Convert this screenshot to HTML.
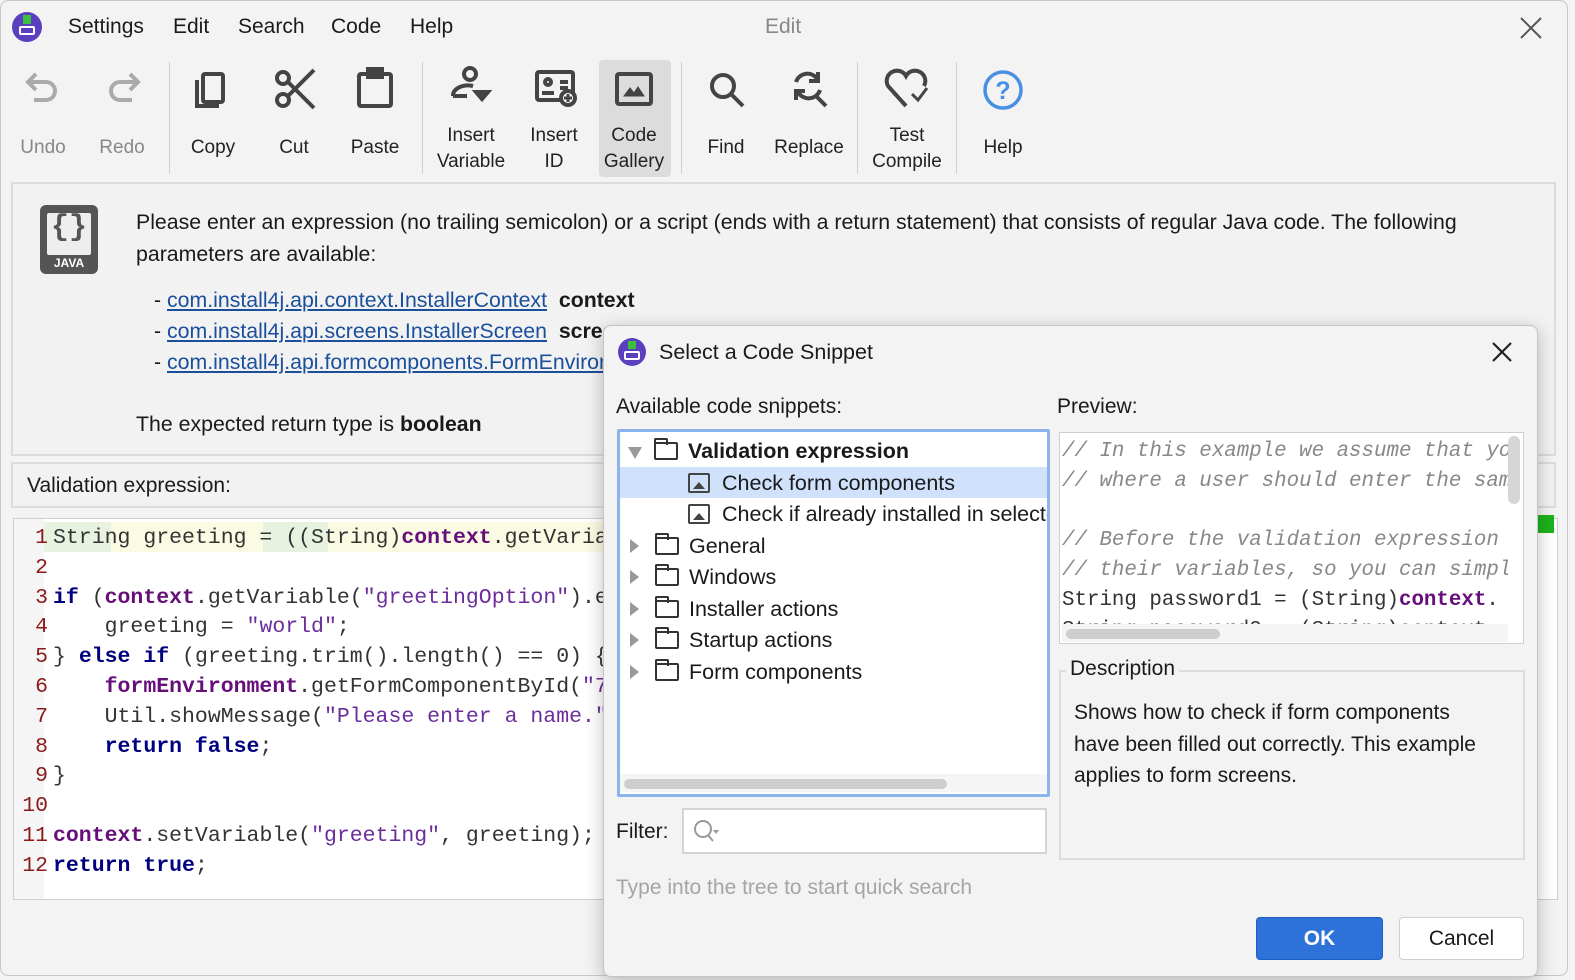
<!DOCTYPE html>
<html><head><meta charset="utf-8"><style>
*{box-sizing:border-box;margin:0;padding:0}
body{width:1575px;height:980px;background:#f3f3f3;font-family:"Liberation Sans",sans-serif;color:#1a1a1a;position:relative;overflow:hidden}
.a{position:absolute}
.win{left:0;top:0;width:1568px;height:976px;border:1px solid #c8c8c8;border-radius:8px;background:#f3f3f3}
.menu{font-size:21px;top:15px}
.tb{top:60px;text-align:center;font-size:19px;color:#222;line-height:26px}
.tbl{position:absolute;width:80px;text-align:center}
.sep{position:absolute;top:62px;width:1px;height:112px;background:#d0d0d0}
.mono{font-family:"Liberation Mono",monospace}
.code{font-size:21.5px;line-height:29.8px;white-space:pre;color:#333}
.kw{color:#000080;font-weight:bold}
.pv{color:#660e7a;font-weight:bold}
.st{color:#6a2d9a}
.ln{color:#8b1a1a;text-align:right;width:34px}
a{color:#1a4f9c;text-decoration:underline}
.tree div{height:31.5px;line-height:31.5px;font-size:21.5px;white-space:nowrap;position:relative}
.fold{display:inline-block;width:24px;height:18px;border:2px solid #333;border-radius:2px;vertical-align:-2px;margin-right:10px;position:relative}
.fold:before{content:"";position:absolute;left:-2px;top:-6px;width:10px;height:5px;border:2px solid #333;border-bottom:none;border-radius:2px 2px 0 0}
.img{display:inline-block;width:22px;height:20px;border:2px solid #444;border-radius:2px;vertical-align:-3px;margin-right:12px;position:relative}
.img:after{content:"";position:absolute;left:3px;bottom:2px;border-left:6px solid transparent;border-right:6px solid transparent;border-bottom:7px solid #444}
.tri{display:inline-block;width:0;height:0;border-top:7px solid transparent;border-bottom:7px solid transparent;border-left:9px solid #999;margin:0 16px 0 10px}
.trd{display:inline-block;width:0;height:0;border-left:7px solid transparent;border-right:7px solid transparent;border-top:12px solid #999;margin:0 12px 0 8px;vertical-align:-1px}
</style></head><body>
<div class="a win"></div>
<div class="a" style="left:12px;top:12px;width:30px;height:30px;border-radius:50%;background:#5a3fc0"></div>
<div class="a" style="left:19px;top:26px;width:16px;height:9px;border:2px solid #fff;border-radius:2px"></div>
<div class="a" style="left:23px;top:15px;width:8px;height:9px;background:#3fbf3f"></div>
<div class="a menu" style="left:68px">Settings</div>
<div class="a menu" style="left:173px">Edit</div>
<div class="a menu" style="left:238px">Search</div>
<div class="a menu" style="left:331px">Code</div>
<div class="a menu" style="left:410px">Help</div>
<div class="a menu" style="left:765px;color:#888">Edit</div>
<svg class="a" style="left:1520px;top:17px" width="22" height="22" stroke="#555" stroke-width="2"><path d="M1 1l20 20M21 1L1 21"/></svg>

<div class="a" style="left:599px;top:60px;width:72px;height:117px;background:#dcdcdc;border-radius:4px"></div>
<div class="sep" style="left:169px"></div><div class="sep" style="left:422px"></div><div class="sep" style="left:681px"></div><div class="sep" style="left:857px"></div><div class="sep" style="left:956px"></div>
<svg class="a" style="left:0;top:60px" width="1040" height="60" fill="none" stroke-width="4">
<g stroke="#aaa"><path d="M30 22h16a9 9 0 0 1 0 18h-12M36 14l-8 8 8 8"/><path d="M136 22h-16a9 9 0 0 0 0 18h12M130 14l8 8-8 8"/></g>
<g stroke="#444">
<rect x="203" y="14" width="20" height="28" rx="2"/><path d="M197 20v26h22"/>
<circle cx="283" cy="40" r="6"/><circle cx="283" cy="18" r="6"/><path d="M288 36l26-26M288 22l26 26"/>
<rect x="359" y="14" width="32" height="32" rx="2"/><rect x="368" y="9" width="14" height="8" fill="#444"/>
<circle cx="470" cy="14" r="6"/><path d="M453 36a15 10 0 0 1 20-10"/><path d="M453 36h14"/><path d="M476 32h12l-6 7z" fill="#444"/>
<rect x="537" y="12" width="36" height="28" rx="2"/><circle cx="548" cy="22" r="3"/><path d="M542 33h12M560 22h8M560 28h8"/><circle cx="568" cy="38" r="7" fill="#fff"/><path d="M568 34v8M564 38h8" stroke-width="3"/>
<rect x="617" y="14" width="34" height="30" rx="2"/><path d="M624 36l6-8 4 5 4-6 6 9z" fill="#444" stroke-width="1"/>
<circle cx="723" cy="26" r="11"/><path d="M731 34l12 12"/>
<path d="M796 22a12 12 0 0 1 22-2M818 12v9h-9M820 30a12 12 0 0 1-22 2M796 40v-9h9M816 36l10 10"/>
<path d="M906 46l-18-20a9 9 0 0 1 18-10 9 9 0 0 1 18 10" /><path d="M912 34l6 6 9-12" stroke-width="3"/>
</g>
<circle cx="1003" cy="30" r="18" stroke="#4a90e2" stroke-width="3.5"/>
<text x="1003" y="39" font-size="25" fill="#4a90e2" stroke="none" text-anchor="middle" font-family="Liberation Sans" font-weight="bold">?</text>
</svg>
<div class="a tb" style="left:0;top:60px;width:100%">
<div class="tbl" style="left:3px;top:75px;color:#888">Undo</div>
<div class="tbl" style="left:82px;top:75px;color:#888">Redo</div>
<div class="tbl" style="left:173px;top:75px">Copy</div>
<div class="tbl" style="left:254px;top:75px">Cut</div>
<div class="tbl" style="left:335px;top:75px">Paste</div>
<div class="tbl" style="left:426px;top:63px;width:90px">Insert<br>Variable</div>
<div class="tbl" style="left:514px;top:63px">Insert<br>ID</div>
<div class="tbl" style="left:594px;top:63px">Code<br>Gallery</div>
<div class="tbl" style="left:686px;top:75px">Find</div>
<div class="tbl" style="left:769px;top:75px">Replace</div>
<div class="tbl" style="left:862px;top:63px;width:90px">Test<br>Compile</div>
<div class="tbl" style="left:963px;top:75px">Help</div>
</div>

<div class="a" style="left:11px;top:182px;width:1545px;height:274px;border:2px solid #dcdcdc;background:#f2f2f2"></div>
<div class="a" style="left:40px;top:205px;width:58px;height:69px;background:#555;border-radius:6px"></div>
<div class="a" style="left:47px;top:213px;width:44px;height:42px;background:#eee;border-radius:2px"></div>
<div class="a mono" style="left:47px;top:211px;width:44px;text-align:center;font-size:30px;font-weight:bold;color:#555">{}</div>
<div class="a" style="left:40px;top:256px;width:58px;text-align:center;font-size:12px;font-weight:bold;color:#fff">JAVA</div>
<div class="a" style="left:136px;top:206px;font-size:21.3px;line-height:32px;width:1400px">Please enter an expression (no trailing semicolon) or a script (ends with a return statement) that consists of regular Java code. The following<br>parameters are available:</div>
<div class="a" style="left:154px;top:285px;font-size:21.3px;line-height:31px;white-space:nowrap">
- <a>com.install4j.api.context.InstallerContext</a>&nbsp; <b>context</b><br>
- <a>com.install4j.api.screens.InstallerScreen</a>&nbsp; <b>screen</b><br>
- <a>com.install4j.api.formcomponents.FormEnvironment</a></div>
<div class="a" style="left:136px;top:412px;font-size:21.3px">The expected return type is <b>boolean</b></div>

<div class="a" style="left:11px;top:462px;width:1545px;height:46px;border:2px solid #dcdcdc;background:#f2f2f2"></div>
<div class="a" style="left:27px;top:474px;font-size:21px">Validation expression:</div>

<div class="a" style="left:13px;top:518px;width:1545px;height:382px;border:1px solid #cfcfcf;background:#fff"></div>
<div class="a" style="left:14px;top:519px;width:30px;height:380px;background:#f5f5f5"></div>
<div class="a" style="left:44px;top:522px;width:560px;height:30px;background:#fbfbe4"></div>
<div class="a" style="left:44px;top:522px;width:67px;height:30px;background:#e8f2e0"></div>
<div class="a" style="left:263px;top:522px;width:65px;height:30px;background:#e8f2e0"></div>
<div class="a mono code ln" style="left:14px;top:524px">1
2
3
4
5
6
7
8
9
10
11
12</div>
<div class="a mono code" style="left:53px;top:524px">String greeting = ((String)<span class="pv">context</span>.getVariable
 
<span class="kw">if</span> (<span class="pv">context</span>.getVariable(<span class="st">"greetingOption"</span>).e
    greeting = <span class="st">"world"</span>;
} <span class="kw">else if</span> (greeting.trim().length() == 0) {
    <span class="pv">formEnvironment</span>.getFormComponentById(<span class="st">"7</span>
    Util.showMessage(<span class="st">"Please enter a name."</span>
    <span class="kw">return false</span>;
}
 
<span class="pv">context</span>.setVariable(<span class="st">"greeting"</span>, greeting);
<span class="kw">return true</span>;</div>
<div class="a" style="left:1538px;top:515px;width:16px;height:18px;background:#1db31d"></div>

<div class="a" style="left:603px;top:325px;width:935px;height:652px;background:#f3f3f3;border:1px solid #c4c4c4;border-radius:8px;box-shadow:0 4px 18px rgba(0,0,0,.25)"></div>
<div class="a" style="left:618px;top:338px;width:28px;height:28px;border-radius:50%;background:#5a3fc0"></div>
<div class="a" style="left:624px;top:351px;width:16px;height:9px;border:2px solid #fff;border-radius:2px"></div>
<div class="a" style="left:628px;top:341px;width:8px;height:8px;background:#3fbf3f"></div>
<div class="a" style="left:659px;top:340px;font-size:21.5px">Select a Code Snippet</div>
<svg class="a" style="left:1492px;top:342px" width="20" height="20" stroke="#222" stroke-width="2.2"><path d="M1 1l18 18M19 1L1 19"/></svg>
<div class="a" style="left:616px;top:395px;font-size:21px">Available code snippets:</div>
<div class="a" style="left:1057px;top:395px;font-size:21px">Preview:</div>

<div class="a" style="left:617px;top:429px;width:433px;height:368px;border:3px solid #8cb4ec;background:#fff;border-radius:2px"></div>
<div class="a" style="left:620px;top:467px;width:427px;height:31px;background:#cfe1fb"></div>
<div class="a tree" style="left:620px;top:436px;width:427px;overflow:hidden">
<div><span class="trd"></span><span class="fold"></span><b>Validation expression</b></div>
<div style="padding-left:68px"><span class="img"></span>Check form components</div>
<div style="padding-left:68px"><span class="img"></span>Check if already installed in selected</div>
<div><span class="tri"></span><span class="fold"></span>General</div>
<div><span class="tri"></span><span class="fold"></span>Windows</div>
<div><span class="tri"></span><span class="fold"></span>Installer actions</div>
<div><span class="tri"></span><span class="fold"></span>Startup actions</div>
<div><span class="tri"></span><span class="fold"></span>Form components</div>
</div>
<div class="a" style="left:620px;top:774px;width:427px;height:18px;background:#f5f5f5"></div>
<div class="a" style="left:624px;top:779px;width:323px;height:10px;background:#cdcdcd;border-radius:5px"></div>

<div class="a" style="left:1059px;top:432px;width:465px;height:212px;border:1px solid #cfcfcf;background:#fff;overflow:hidden"></div>
<div class="a mono" style="left:1062px;top:437px;width:446px;height:188px;overflow:hidden;font-size:20.8px;line-height:29.8px;white-space:pre;color:#888;font-style:italic">// In this example we assume that you
// where a user should enter the same
 
// Before the validation expression
// their variables, so you can simply
<span style="font-style:normal;color:#333">String password1 = (String)<span class="pv">context</span>.</span>
<span style="font-style:normal;color:#333">String password2 = (String)context.</span></div>
<div class="a" style="left:1508px;top:436px;width:12px;height:68px;background:#d6d6d6;border-radius:6px"></div>
<div class="a" style="left:1062px;top:624px;width:446px;height:18px;background:#f5f5f5"></div>
<div class="a" style="left:1066px;top:629px;width:154px;height:10px;background:#cdcdcd;border-radius:5px"></div>

<div class="a" style="left:1059px;top:670px;width:466px;height:190px;border:2px solid #dcdcdc"></div>
<div class="a" style="left:1066px;top:657px;font-size:21px;background:#f3f3f3;padding:0 4px">Description</div>
<div class="a" style="left:1074px;top:697px;font-size:21px;line-height:31.5px">Shows how to check if form components<br>have been filled out correctly. This example<br>applies to form screens.</div>

<div class="a" style="left:616px;top:820px;font-size:21px">Filter:</div>
<div class="a" style="left:682px;top:808px;width:365px;height:46px;border:2px solid #d4d4d4;background:#fff"></div>
<svg class="a" style="left:692px;top:818px" width="30" height="28" fill="none" stroke="#999" stroke-width="2"><circle cx="11" cy="11" r="8"/><path d="M16 17l5 6"/><path d="M21 12h6l-3 4z" fill="#999" stroke="none"/></svg>
<div class="a" style="left:616px;top:876px;font-size:21px;color:#a5a5a5">Type into the tree to start quick search</div>

<div class="a" style="left:1256px;top:917px;width:127px;height:43px;background:#2d72d9;border:1px solid #1f5fbf;border-radius:4px;color:#fff;font-size:21px;font-weight:bold;text-align:center;line-height:41px">OK</div>
<div class="a" style="left:1399px;top:917px;width:125px;height:43px;background:#fff;border:1px solid #cfcfcf;border-radius:4px;font-size:21px;text-align:center;line-height:41px">Cancel</div>
</body></html>
